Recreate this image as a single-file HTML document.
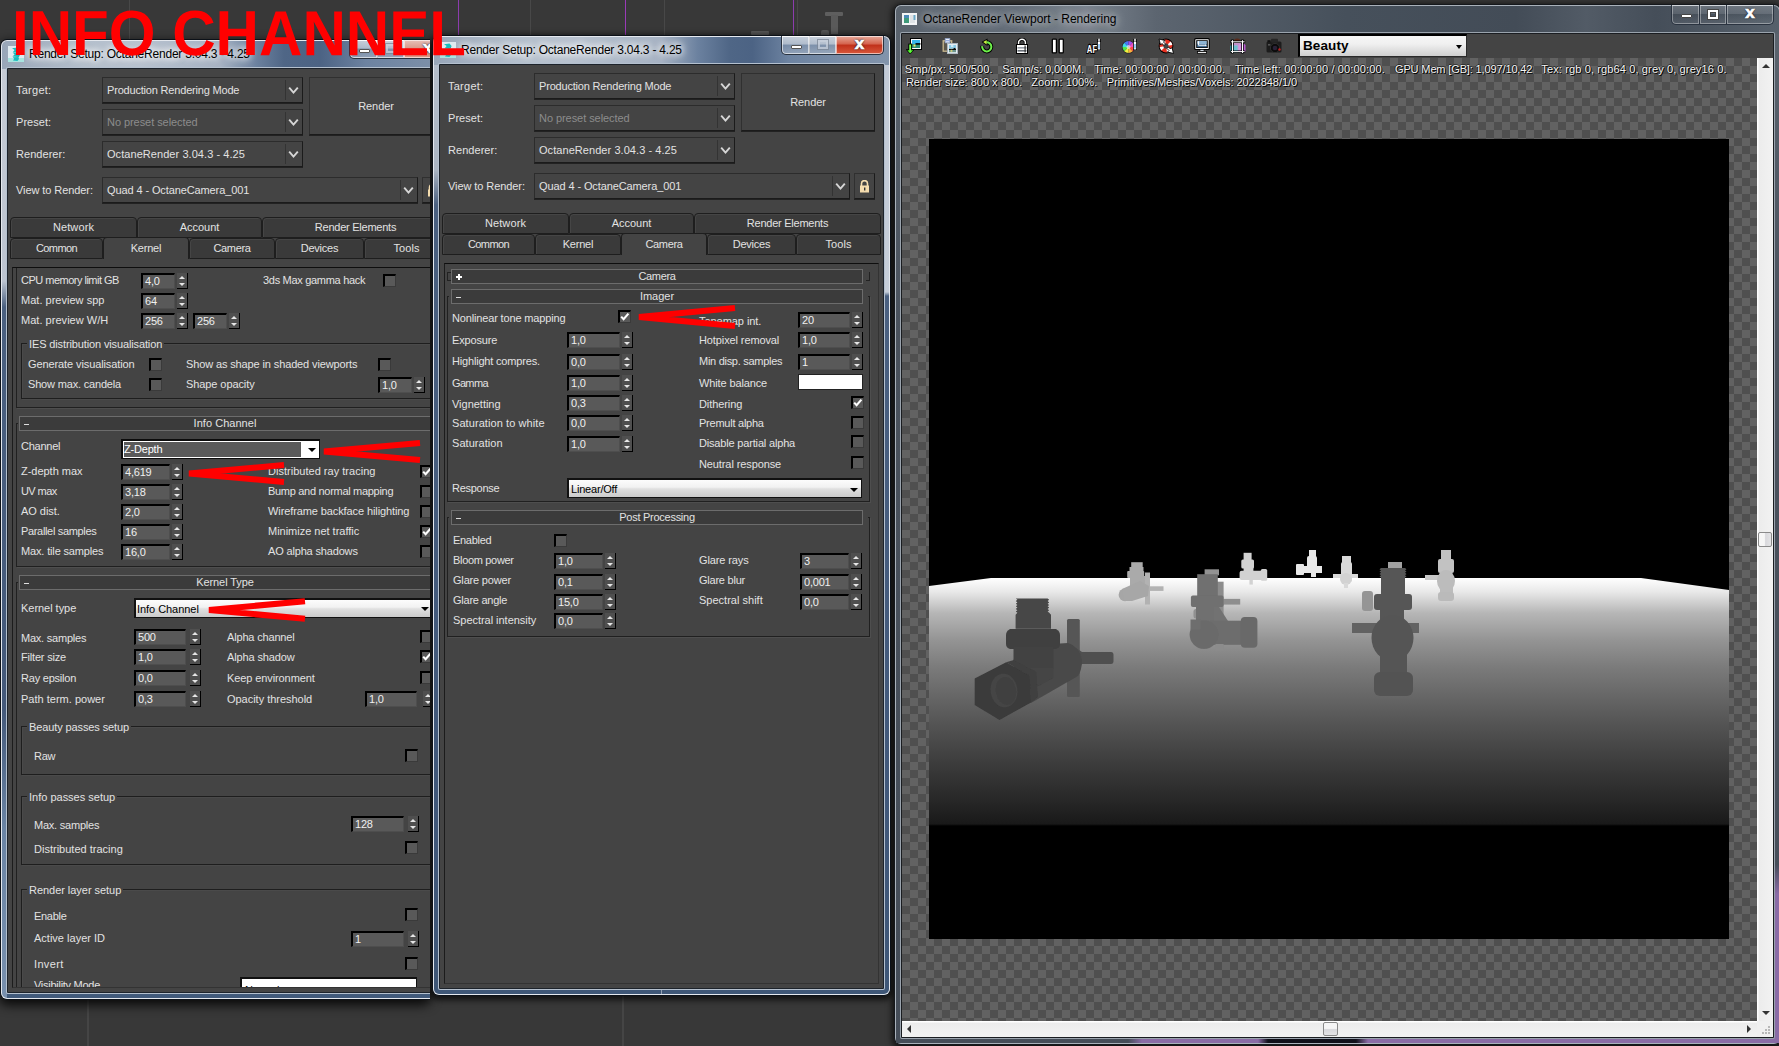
<!DOCTYPE html><html><head><meta charset="utf-8"><title>Info Channel</title><style>
html,body{margin:0;padding:0}
body{width:1779px;height:1046px;overflow:hidden;background:#383838;position:relative;font-family:"Liberation Sans",sans-serif}
div{position:absolute;box-sizing:border-box}
svg{display:block}
.t{font:11px/13px "Liberation Sans",sans-serif;color:#e2e2e2;white-space:nowrap;letter-spacing:-0.2px}
.win{}
.f0{left:0;top:0;right:0;bottom:0;background:#0c1118;border-radius:7px}
.f1{left:1px;top:1px;right:1px;bottom:1px;background:#e4e8ee;border-radius:6px}
.f2{left:2px;top:2px;right:2px;height:28px;border-radius:5px 5px 0 0}
.f2b{left:2px;top:30px;right:2px;bottom:2px;border-radius:0 0 5px 5px}
.gM{background:linear-gradient(90deg,#98a6b8 0%,#b4bfcc 18%,#b8c2cf 30%,#a6b2c3 50%,#6b819f 58%,#4f6686 65%,#4c6384 70%,#6d83a1 78%,#8294ab 100%)}
.gL{background:linear-gradient(90deg,#98a6b8 0%,#b4bfcc 18%,#b8c2cf 30%,#a6b2c3 48%,#6b819f 56%,#4f6686 62%,#4c6384 70%,#6d83a1 80%,#8294ab 100%)}
.sM{background:linear-gradient(#b4bdca 0px,#aab4c2 105px,#4a6080 140px,#41587a 700px,#3f5777 100%) left/50% 100% no-repeat,linear-gradient(#c2cad6 0px,#c6ced9 227px,#4a6080 231px,#41587a 700px,#3f5777 100%) right/50% 100% no-repeat}
.sL{background:linear-gradient(#c6ccd6 0px,#bcc4d0 212px,#4a6080 238px,#44597a 640px,#6a84a4 760px,#7890ae 100%)}
.c1{left:6px;top:28px;right:6px;bottom:6px;background:#b4c0ce;border-radius:2px}
.c2{left:7px;top:29px;right:7px;bottom:7px;background:#1d232b;border-radius:1px}
.client{left:8px;top:30px;right:8px;bottom:8px;background:#444;overflow:hidden}
.ticon{left:8px;top:7px;width:16px;height:16px}
.ttext{left:29px;top:7px;font:12px/16px "Liberation Sans",sans-serif;color:#000;white-space:nowrap;text-shadow:0 0 6px #fff,0 0 8px #fff,0 0 10px #fff}
.wb{top:1px;height:19px;border:1px solid #2a3340;border-top:none;box-shadow:inset 0 0 0 1px rgba(255,255,255,.6);background:linear-gradient(rgba(255,255,255,.62),rgba(255,255,255,.45) 45%,rgba(255,255,255,.08) 50%,rgba(255,255,255,.25))}
.wmin{width:29px;border-radius:0 0 0 5px}
.wmax{width:28px;border-left:none}
.wcls{width:48px;border-left:none;border-radius:0 0 5px 0;background:linear-gradient(#e8a99a,#d4624c 45%,#c0301a 50%,#d8583c)}
.wcls.faded{background:linear-gradient(#e8c0b8,#d89a8c 45%,#c8806e 50%,#dc9a88)}
.xx{left:0;width:100%;top:-2px;text-align:center;font:bold 17px/20px "Liberation Sans",sans-serif;color:#fff;-webkit-text-stroke:0.7px #fff;text-shadow:0 0 2px #223,0 0 2px #223,0 0 1px #000}
.co{background:#444;border:1px solid #2c2c2c;border-right-color:#1b1b1b;border-bottom-color:#1b1b1b;box-shadow:0 1px 0 #222}
.btn{background:#444;border:1px solid #303030;border-right-color:#1b1b1b;border-bottom-color:#1b1b1b;box-shadow:0 1px 0 #222}
.tab{background:#3a3a3a;border:1px solid #1e1e1e;border-bottom:1px solid #1e1e1e;border-radius:4px 4px 0 0;box-shadow:inset 1px 1px 0 #454545}
.tab.on{background:#444;border-bottom:none;box-shadow:none}
.rh{background:#3b3b3b;border:1px solid #6c6c6c}
.rf{border:1px solid #202020;border-top:none;box-shadow:1px 1px 0 #4e4e4e}
.rf:before,.rf:after{content:'';position:absolute;top:0;width:2px;height:1px;background:#202020}
.rf:before{left:-1px}
.rf:after{right:-1px}
.gb{border:1px solid #1e1e1e;box-shadow:inset 1px 1px 0 #4a4a4a, 1px 1px 0 #4a4a4a}
.sp{background:#595959;border:2px solid #000;border-right:1px solid #4e4e4e;border-bottom:1px solid #4e4e4e}
.sp span{position:absolute;left:2px;top:0px;font:11px/13px "Liberation Sans",sans-serif;color:#f0f0f0;letter-spacing:-0.2px}
.sa{background:#4f4f4f;border-right:1px solid #000;border-bottom:1px solid #000}
.sa i{position:absolute;left:2px;width:0;height:0;border-left:3px solid transparent;border-right:3px solid transparent}
.sa i.u{top:3px;border-bottom:3px solid #e6e6e6}
.sa i.d{top:10px;border-top:3px solid #e6e6e6}
.cb{width:13px;height:13px;background:#595959;border:2px solid #000;border-right:1px solid #3a3a3a;border-bottom:1px solid #3a3a3a}
.gR{background:linear-gradient(90deg,#5a636d 0,#646d78 120px,#7a838e 190px,#5c6570 260px,#46505b 450px,#434c57 620px,#525b66 690px,#454e59 760px,#56606b 100%)}
.ib{background:linear-gradient(rgba(255,255,255,.18),rgba(255,255,255,.10) 45%,rgba(0,0,0,.05) 50%,rgba(255,255,255,.06));box-shadow:inset 0 0 0 1px rgba(255,255,255,.35)}
.sR{background:linear-gradient(#5a636d 0,#535c67 120px,#4a525d 300px,#454d58 100%)}
.big{left:11.5px;top:-2.3px;font:bold 63.7px/70px "Liberation Sans",sans-serif;color:#f00;white-space:nowrap;transform:scale(0.9435,1.0) rotate(0.03deg);transform-origin:0 57px}
</style></head><body>
<div style="left:129px;top:0px;width:1px;height:40px;background:#484848"></div><div style="left:458px;top:0px;width:1px;height:36px;background:#8c3cae"></div><div style="left:530px;top:0px;width:1px;height:36px;background:#484848"></div><div style="left:625px;top:0px;width:1px;height:36px;background:#9a3ab8"></div><div style="left:664px;top:0px;width:1px;height:36px;background:#484848"></div><div style="left:793px;top:0px;width:1px;height:36px;background:#8c3cae"></div><div style="left:797px;top:0px;width:1px;height:36px;background:#484848"></div><div style="left:825px;top:12px;width:18px;height:4px;background:#5e5e5e;border-radius:1px"></div><div style="left:831px;top:15px;width:7px;height:19px;background:#5a5a5a"></div><div style="left:821px;top:30px;width:8px;height:5px;background:#585858;border-radius:2px 2px 0 0"></div><div style="left:751px;top:31px;width:18px;height:4px;background:#5a5a5a;border-radius:1px"></div><div style="left:87px;top:999px;width:2px;height:47px;background:#454545"></div><div style="left:622px;top:995px;width:2px;height:51px;background:#454545"></div>
<div style="left:0px;top:39px;width:430px;height:961px;border-radius:7px;box-shadow:0 4px 11px 1px rgba(0,0,0,.85)"></div>
<div style="left:432px;top:35px;width:459px;height:961px;border-radius:7px;box-shadow:0 2px 6px 2px rgba(0,0,0,.7)"></div>
<div style="left:894px;top:4px;width:887px;height:1041px;border-radius:7px;box-shadow:0 2px 6px 2px rgba(0,0,0,.7)"></div>
<div class="win" style="left:894px;top:4px;width:887px;height:1041px"><div class="f0" style="background:#15181c"></div><div class="f1" style="background:#a9b1ba"></div><div class="f2 gR"></div><div class="f2b sR"></div><div style="left:2px;right:2px;bottom:2px;height:5px;background:linear-gradient(90deg,#454d58 0,#454d58 232px,#8a6ca6 246px,#8a6ca6 362px,#10101a 372px,#10101a 460px,#8a6ca6 472px,#8a6ca6 100%)"></div><div style="right:2px;width:5px;top:860px;bottom:2px;background:linear-gradient(#454d58,#8a6ca6 30px,#8a6ca6)"></div><div class="ticon" style="left:8px;top:9px;width:15px;height:12px"><svg width="15" height="12" viewBox="0 0 15 12"><rect width="15" height="12" fill="#f2f4f6"/><rect x="2" y="2" width="5" height="8" fill="#3f9a7a"/><rect x="2" y="2" width="5" height="3" fill="#4a8ab8"/><rect x="8" y="2" width="5" height="8" fill="#dfe3e6"/><rect x="11.5" y="2" width="2" height="5" fill="#6aa8c8"/></svg></div><div class="ttext" style="left:29px;top:7px;text-shadow:0 0 7px rgba(255,255,255,.55),0 0 10px rgba(255,255,255,.45),0 0 14px rgba(255,255,255,.35);letter-spacing:-0.012px">OctaneRender Viewport - Rendering</div><div class="wb wmin ib" style="left:777px;width:29px;height:20px"><div style="left:9px;top:9px;width:11px;height:4px;background:#fff;border:1px solid #444;border-radius:1px"></div></div><div class="wb wmax ib" style="left:806px;width:27px;height:20px"><div style="left:8px;top:5px;width:10px;height:9px;border:2px solid #fff;box-shadow:0 0 0 1px #444, inset 0 0 0 1px #444"></div></div><div class="wb ib" style="left:833px;width:47px;height:20px;border-left:none;border-radius:0 0 5px 0"><div class="xx">x</div></div><div class="c1" style="background:#9aa3ad"></div><div class="c2" style="background:#1a1d21"></div><div class="client" style="background:#444"><div style="left:0px;top:0px;width:871px;height:24px;background:#444"></div><svg width="16" height="16" viewBox="0 0 16 16" style="position:absolute;left:4px;top:4px"><rect x="4.5" y="0.5" width="11" height="11" fill="#fff" stroke="#000" stroke-width="1"/><rect x="6.0" y="2.0" width="8" height="4.0" fill="#38b6ee"/><rect x="6.0" y="6.0" width="8" height="4.0" fill="#2f8f7a"/><rect x="9.45" y="5.12" width="4.95" height="1.6" fill="#000"/><rect x="7.5" y="6.550000000000001" width="2" height="2" fill="#f0e060"/><path d="M4.2 5.6 v7" stroke="#000" stroke-width="3.8"/><path d="M-0.4 11.2 h9.2 l-4.6 5.2 Z" fill="#000"/><path d="M4.2 6.4 v6" stroke="#4dff2a" stroke-width="1.9"/><path d="M1.3 12.2 h5.8 l-2.9 3.2 Z" fill="#4dff2a"/><path d="M4.2 7 v6.5" stroke="#b8ff90" stroke-width=".7"/></svg><svg width="16" height="16" viewBox="0 0 16 16" style="position:absolute;left:40px;top:4px"><rect x="1.2" y="2.8" width="8.5" height="10.4" fill="#5c574c" stroke="#c9b88f" stroke-width="1.3"/><rect x="3.2" y="0.6" width="4.6" height="4.2" fill="#eef3ff" stroke="#93a6cc" stroke-width=".8"/><rect x="3.4" y="2.2" width="4.2" height="1.1" fill="#7f9ad6"/><rect x="5.5" y="5.5" width="10" height="10.3" fill="#e6edf2" stroke="#aab6bf" stroke-width="1"/><rect x="7" y="7" width="7" height="3.6" fill="#8ccbe6"/><rect x="7" y="10.6" width="7" height="3.6" fill="#6b958c"/><path d="M7 10.9 h4 l1.5 -1.2 l1.5 1.2 v1 h-7 Z" fill="#0a0a0a"/><rect x="8.6" y="11.8" width="1.8" height="2" fill="#d8cf78"/><rect x="9" y="7.4" width="2.4" height="1.2" fill="#fff"/></svg><svg width="16" height="16" viewBox="0 0 16 16" style="position:absolute;left:76px;top:4px"><path d="M4.2 8 A4.6 4.6 0 1 0 8.4 4.2" fill="none" stroke="#000" stroke-width="4"/><path d="M9.5 0.5 L3.5 4 L9.5 8 Z" fill="#000"/><path d="M4.2 8.2 A4.6 4.6 0 1 0 8.4 4.2" fill="none" stroke="#6df04a" stroke-width="2"/><path d="M8.6 1.9 L5.2 4.1 L8.6 6.4 Z" fill="#c8f040"/></svg><svg width="16" height="16" viewBox="0 0 16 16" style="position:absolute;left:112px;top:4px"><path d="M4.6 7 V4.6 a3.4 3.4 0 0 1 6.8 0 V7" fill="none" stroke="#000" stroke-width="3.2"/><path d="M4.6 7 V4.6 a3.4 3.4 0 0 1 6.8 0 V7" fill="none" stroke="#fff" stroke-width="1.5"/><rect x="2.5" y="6.5" width="11" height="9" fill="#fff" stroke="#000" stroke-width="1"/><rect x="3.5" y="9" width="9" height="1.6" fill="#9aa0a8"/><rect x="3.5" y="12" width="9" height="1.6" fill="#6a7078"/><rect x="10.5" y="7.5" width="1.2" height="7" fill="#333"/></svg><svg width="16" height="16" viewBox="0 0 16 16" style="position:absolute;left:148px;top:4px"><rect x="2.3" y="1.2" width="4.1" height="13.6" rx=".6" fill="#fff" stroke="#000" stroke-width="1.3"/><rect x="9.2" y="1.2" width="4.1" height="13.6" rx=".6" fill="#fff" stroke="#000" stroke-width="1.3"/></svg><svg width="16" height="16" viewBox="0 0 16 16" style="position:absolute;left:184px;top:4px"><text transform="translate(0.8,15) scale(0.72,1)" font-family="Liberation Sans, sans-serif" font-weight="bold" font-size="10.8" fill="#fff" stroke="#000" stroke-width="2.2" paint-order="stroke">AF</text><path d="M13 1 v3" stroke="#000" stroke-width="3.4"/><path d="M13 3.5 v8.5" stroke="#000" stroke-width="4"/><path d="M13 0.8 v3" stroke="#fff" stroke-width="1.5"/><path d="M13 4 v7.5" stroke="#fff" stroke-width="2.4"/><path d="M13 6 v4.5" stroke="#5aa8f0" stroke-width="1.2"/></svg><svg width="16" height="16" viewBox="0 0 16 16" style="position:absolute;left:220px;top:4px"><circle cx="6.5" cy="9" r="6.6" fill="#222"/><path d="M6.5 9 L12.50 9.00 A6 6 0 0 1 10.74 13.24 Z" fill="#ff4848"/><path d="M6.5 9 L10.74 13.24 A6 6 0 0 1 6.50 15.00 Z" fill="#ffb040"/><path d="M6.5 9 L6.50 15.00 A6 6 0 0 1 2.26 13.24 Z" fill="#f0f040"/><path d="M6.5 9 L2.26 13.24 A6 6 0 0 1 0.50 9.00 Z" fill="#50e850"/><path d="M6.5 9 L0.50 9.00 A6 6 0 0 1 2.26 4.76 Z" fill="#40d8e8"/><path d="M6.5 9 L2.26 4.76 A6 6 0 0 1 6.50 3.00 Z" fill="#4878f8"/><path d="M6.5 9 L6.50 3.00 A6 6 0 0 1 10.74 4.76 Z" fill="#a050f0"/><path d="M6.5 9 L10.74 4.76 A6 6 0 0 1 12.50 9.00 Z" fill="#f050c0"/><circle cx="6.5" cy="9" r="2" fill="#fff" opacity=".6"/><path d="M13 1 v3" stroke="#000" stroke-width="3.4"/><path d="M13 3.5 v8.5" stroke="#000" stroke-width="4"/><path d="M13 0.8 v3" stroke="#fff" stroke-width="1.5"/><path d="M13 4 v7.5" stroke="#fff" stroke-width="2.4"/><path d="M13 6 v4.5" stroke="#5aa8f0" stroke-width="1.2"/></svg><svg width="16" height="16" viewBox="0 0 16 16" style="position:absolute;left:256px;top:4px"><circle cx="8" cy="8" r="7.4" fill="#000"/><circle cx="8" cy="8" r="6.4" fill="#e83020"/><path d="M8 8 L3.5 3.5 A6.4 6.4 0 0 1 7 1.7 Z M8 8 L12.5 12.5 A6.4 6.4 0 0 1 9 14.3 Z M8 8 L12.6 3.6 A6.4 6.4 0 0 1 14.3 7 Z M8 8 L3.4 12.4 A6.4 6.4 0 0 1 1.7 9 Z" fill="#fff"/><circle cx="8" cy="8" r="2.6" fill="#444"/><path d="M1 1 L7 2.5 L5.5 4 L7.5 6 L6 7.5 L4 5.5 L2.5 7 Z" fill="#fff" stroke="#000" stroke-width=".9"/><path d="M15.5 15.5 L9.5 14 L11 12.5 L9 10.5 L10.5 9 L12.5 11 L14 9.5 Z" fill="#fff" stroke="#000" stroke-width=".9"/></svg><svg width="16" height="16" viewBox="0 0 16 16" style="position:absolute;left:292px;top:4px"><rect x="0.7" y="0.7" width="14.6" height="10.8" rx="1" fill="#fff" stroke="#000" stroke-width="1.2"/><rect x="2.2" y="2.2" width="11.6" height="7.8" fill="#0a0a0a"/><rect x="3.2" y="3" width="9.6" height="3" fill="#8db4d4"/><rect x="3.2" y="6" width="9.6" height="3.2" fill="#3f6c96"/><path d="M4.4 3.6 v3.6 h7.6" fill="none" stroke="#fff" stroke-width="1"/><path d="M3.4 4.4 L4.4 3 L5.4 4.4 Z M11.4 6.2 L12.8 7.2 L11.4 8.2 Z" fill="#fff"/><rect x="6" y="11.6" width="4" height="1.8" fill="#cfd8e0" stroke="#000" stroke-width=".6"/><rect x="3.4" y="13.4" width="9.2" height="1.9" fill="#fff" stroke="#000" stroke-width=".8"/></svg><svg width="16" height="16" viewBox="0 0 16 16" style="position:absolute;left:328px;top:4px"><ellipse cx="7.2" cy="2.6" rx="3" ry="2" fill="#5a2a1a"/><rect x="0.4" y="7" width="8" height="7.4" rx="1.5" fill="#30b0b8"/><rect x="8.5" y="6" width="7" height="8.6" rx="1.5" fill="#b858d0"/><rect x="3.6" y="4.8" width="7.6" height="7.6" fill="#d8a0e0" opacity=".85"/><rect x="3.6" y="7.5" width="4" height="4.9" fill="#58c8c8" opacity=".8"/><path d="M2.5 1.6 V15.6 M12.5 1.6 V15.6 M0.3 3.8 H15.2 M0.3 13.6 H15.2" fill="none" stroke="#000" stroke-width="2.4"/><path d="M2.5 2.2 V15 M12.5 2.2 V15 M0.9 3.8 H14.6 M0.9 13.6 H14.6" fill="none" stroke="#fff" stroke-width="1"/></svg><svg width="16" height="16" viewBox="0 0 16 16" style="position:absolute;left:364px;top:4px"><rect x="0.5" y="3.5" width="15" height="11" rx="1.5" fill="#1c1c1c"/><rect x="5" y="0.8" width="7" height="4" rx="1" fill="#262626"/><rect x="1.5" y="2.2" width="3" height="2" fill="#111"/><circle cx="9" cy="10" r="4.6" fill="#0c0c0c" stroke="#333" stroke-width=".8"/><circle cx="9" cy="10" r="2.3" fill="#2a2238"/><circle cx="13.5" cy="11.5" r="1.2" fill="#c02020"/><rect x="2" y="6" width="2.4" height="1.6" fill="#555"/></svg><div style="left:396px;top:0px;width:169px;height:23px;background:linear-gradient(#f6f6f6 0,#f0f0f0 40%,#cfcfcf 100%);border:1px solid #2a2a2a;border-top:2px solid #000;border-left:2px solid #000"><div style="left:3px;top:1px;font:bold 13.5px/17px 'Liberation Sans',sans-serif;color:#000;letter-spacing:0.1px">Beauty</div><div style="right:4px;top:9px;width:0;height:0;border-left:3.5px solid transparent;border-right:3.5px solid transparent;border-top:4px solid #000"></div></div><div style="left:0px;top:24px;width:855px;height:963px;background-color:#4f4f4f;background-image:conic-gradient(#626262 25%,#4f4f4f 0 50%,#626262 0 75%,#4f4f4f 0);background-size:16px 16px;background-position:0 0"></div><div class="t" style="left:2.7px;top:29px;text-shadow:1px 1px 0 #000,-1px 0 0 rgba(0,0,0,.5),0 -1px 0 rgba(0,0,0,.5);color:#f4f4f4;white-space:pre;letter-spacing:0.111px">Smp/px: 500/500.</div><div class="t" style="left:100.2px;top:29px;text-shadow:1px 1px 0 #000,-1px 0 0 rgba(0,0,0,.5),0 -1px 0 rgba(0,0,0,.5);color:#f4f4f4;white-space:pre;letter-spacing:-0.083px">Samp/s: 0,000M.</div><div class="t" style="left:192.3px;top:29px;text-shadow:1px 1px 0 #000,-1px 0 0 rgba(0,0,0,.5),0 -1px 0 rgba(0,0,0,.5);color:#f4f4f4;white-space:pre;letter-spacing:0.111px">Time: 00:00:00 / 00:00:00.</div><div class="t" style="left:332.7px;top:29px;text-shadow:1px 1px 0 #000,-1px 0 0 rgba(0,0,0,.5),0 -1px 0 rgba(0,0,0,.5);color:#f4f4f4;white-space:pre;letter-spacing:0.148px">Time left: 00:00:00 / 00:00:00.</div><div class="t" style="left:493.0px;top:29px;text-shadow:1px 1px 0 #000,-1px 0 0 rgba(0,0,0,.5),0 -1px 0 rgba(0,0,0,.5);color:#f4f4f4;white-space:pre;letter-spacing:-0.135px">GPU Mem [GB]: 1,097/10,42</div><div class="t" style="left:639.3px;top:29px;text-shadow:1px 1px 0 #000,-1px 0 0 rgba(0,0,0,.5),0 -1px 0 rgba(0,0,0,.5);color:#f4f4f4;white-space:pre;letter-spacing:0.130px">Tex: rgb 0, rgb64 0, grey 0, grey16 0.</div><div class="t" style="left:3.9px;top:42px;text-shadow:1px 1px 0 #000,-1px 0 0 rgba(0,0,0,.5),0 -1px 0 rgba(0,0,0,.5);color:#f4f4f4;white-space:pre;letter-spacing:0.000px">Render size: 800 x 800.</div><div class="t" style="left:129.2px;top:42px;text-shadow:1px 1px 0 #000,-1px 0 0 rgba(0,0,0,.5),0 -1px 0 rgba(0,0,0,.5);color:#f4f4f4;white-space:pre;letter-spacing:0.058px">Zoom: 100%.</div><div class="t" style="left:204.8px;top:42px;text-shadow:1px 1px 0 #000,-1px 0 0 rgba(0,0,0,.5),0 -1px 0 rgba(0,0,0,.5);color:#f4f4f4;white-space:pre;letter-spacing:-0.047px">Primitives/Meshes/Voxels: 2022848/1/0</div><div style="left:27px;top:105px;width:800px;height:800px;background:#000;overflow:hidden"><svg width="800" height="800" viewBox="929 139 800 800" style="position:absolute;left:0;top:0"><defs><linearGradient id="gp" x1="0" y1="578" x2="0" y2="826" gradientUnits="userSpaceOnUse"><stop offset="0.0000" stop-color="#ffffff"/><stop offset="0.0565" stop-color="#e8e8e8"/><stop offset="0.1411" stop-color="#b6b6b6"/><stop offset="0.2500" stop-color="#949494"/><stop offset="0.3589" stop-color="#7b7b7b"/><stop offset="0.4677" stop-color="#686868"/><stop offset="0.5766" stop-color="#565656"/><stop offset="0.6815" stop-color="#464646"/><stop offset="0.7903" stop-color="#363636"/><stop offset="0.8992" stop-color="#272727"/><stop offset="0.9919" stop-color="#191919"/><stop offset="1.0000" stop-color="#000000"/></linearGradient><filter id="bl" x="-5%" y="-5%" width="110%" height="110%"><feGaussianBlur stdDeviation="0.7"/></filter></defs><rect x="929" y="139" width="800" height="800" fill="#000"/><polygon points="929,586 991,578 1641,578 1729,590 1729,826 929,826" fill="url(#gp)"/><g filter="url(#bl)"><rect x="1145" y="572.5" width="5" height="32" fill="#b2b2b2"/><rect x="1149" y="586.3" width="14.5" height="4.6" fill="#b2b2b2"/><rect x="1131.2" y="562.2" width="11.5" height="7" fill="#aaaaaa"/><rect x="1129.5" y="567" width="14" height="6" fill="#aaaaaa"/><rect x="1127.2" y="571" width="17" height="7" rx="1" fill="#aaaaaa"/><rect x="1130" y="576" width="15" height="10" fill="#aaaaaa"/><circle cx="1125" cy="594.8" r="6.4" fill="#a6a6a6"/><path d="M1122 589 L1140 581 L1149 586 L1148 596 L1132 601 L1124 601 Z" fill="#a7a7a7"/><rect x="1243.6" y="552.8" width="8" height="8" fill="#d2d2d2"/><rect x="1241.3" y="559.5" width="12.7" height="9" rx="1.5" fill="#d2d2d2"/><rect x="1243.6" y="567" width="9.8" height="12.4" fill="#d2d2d2"/><rect x="1239.6" y="570.8" width="24" height="9.2" rx="2" fill="#d2d2d2"/><rect x="1260.8" y="569" width="6.4" height="11.8" rx="1.5" fill="#d2d2d2"/><rect x="1249.4" y="579" width="3.4" height="5.6" fill="#d2d2d2"/><rect x="1309" y="550" width="7" height="8" fill="#e8e8e8"/><rect x="1307" y="556" width="10" height="12" rx="2" fill="#e8e8e8"/><rect x="1296" y="564" width="8" height="11" rx="1" fill="#e8e8e8"/><rect x="1300" y="566" width="22" height="7" fill="#e8e8e8"/><rect x="1311" y="566" width="5" height="11" fill="#e8e8e8"/><rect x="1342" y="556" width="9" height="8" fill="#d9d9d9"/><rect x="1341" y="562" width="11" height="20" rx="2" fill="#d9d9d9"/><rect x="1333" y="574" width="25" height="4" fill="#d9d9d9"/><circle cx="1346" cy="579" r="6" fill="#d2d2d2"/><rect x="1344" y="583" width="4" height="5" fill="#d9d9d9"/><rect x="1441" y="550" width="10" height="10" fill="#c2c2c2"/><rect x="1438" y="559" width="16" height="14" rx="2" fill="#c2c2c2"/><rect x="1425" y="575" width="16" height="5" fill="#c8c8c8"/><ellipse cx="1446" cy="581" rx="9" ry="11" fill="#bcbcbc"/><rect x="1440" y="585" width="13" height="12" fill="#bcbcbc"/><rect x="1438" y="592" width="16" height="9" rx="3" fill="#bababa"/><rect x="1215.5" y="581.7" width="8.1" height="68.8" fill="#8c8c8c"/><rect x="1222" y="598.9" width="18.2" height="5.7" fill="#8e8e8e"/><rect x="1204.6" y="569.3" width="14.4" height="6" fill="#929292"/><rect x="1193.5" y="609" width="6" height="9.5" rx="2.5" fill="#909090"/><rect x="1197.2" y="574.2" width="20.6" height="22" fill="#6f6f6f"/><rect x="1190.9" y="595.5" width="32.7" height="11.4" rx="2" fill="#6f6f6f"/><rect x="1196" y="606" width="23" height="16" fill="#6f6f6f"/><path d="M1214 606.9 h5 l9 14 h-14 Z" fill="#727272"/><rect x="1210" y="620.7" width="33" height="24.1" fill="#6d6d6d"/><rect x="1240.8" y="617" width="16.6" height="30.7" rx="4" fill="#696969"/><circle cx="1204" cy="634.6" r="14.4" fill="#6b6b6b"/><rect x="1190.5" y="619.5" width="10" height="10" fill="#6e6e6e"/><rect x="1215.5" y="644" width="8.1" height="6.5" fill="#8c8c8c"/><rect x="1352" y="623" width="67" height="10" fill="#626262"/><rect x="1362" y="591" width="11" height="20" rx="3" fill="#959595"/><rect x="1388" y="562" width="14" height="8" fill="#a2a2a2"/><path d="M1381 568 h24 l1.5 1.2 l-1.5 1.2 l1.5 1.2 l-1.5 1.2 l1.5 1.2 l-1.5 1.2 l1.5 1.2 l-1.5 1.2 v18 h-24 v-18 l-1.5 -1.2 l1.5 -1.2 l-1.5 -1.2 l1.5 -1.2 l-1.5 -1.2 l1.5 -1.2 l-1.5 -1.2 Z" fill="#575757"/><rect x="1374" y="594" width="38" height="16" rx="3" fill="#575757"/><rect x="1380" y="608" width="24" height="14" fill="#575757"/><ellipse cx="1392.5" cy="638" rx="21" ry="23" fill="#555"/><path d="M1372 630 L1381 655 L1388 655 Z" fill="#555"/><rect x="1380" y="652" width="27" height="24" fill="#545454"/><rect x="1374" y="672" width="39" height="24" rx="6" fill="#535353"/><rect x="1067" y="619" width="12.8" height="78" rx="1.5" fill="#565656"/><path d="M1076 648 L1082 652 H1111 q2.5 0 2.5 3 v6 q0 3 -2.5 3 H1082 L1076 668 Z" fill="#4f4f4f"/><path d="M1013 660 L1052 644 L1068 643 Q1079 646 1082 660 Q1082 670 1078 676 L1031 703 L1022 690 Z" fill="#494949"/><path d="M1018.6 598.5 h29 l1.6 1.3 l-1.6 1.3 l1.6 1.3 l-1.6 1.3 l1.6 1.3 l-1.6 1.3 l1.6 1.3 l-1.6 1.3 l1.6 1.3 l-1.6 1.3 l1.6 1.3 l1.8 2 v14 h-35.4 v-14 l1.8 -2 l-1.6 -1.3 l1.6 -1.3 l-1.6 -1.3 l1.6 -1.3 l-1.6 -1.3 l1.6 -1.3 l-1.6 -1.3 l1.6 -1.3 l-1.6 -1.3 l1.6 -1.3 l-1.6 -1.3 Z" fill="#464646"/><path d="M1010 629 h46 q4 2 4 6 v9 q0 4 -4 5 h-46 q-4 -1 -4 -5 v-9 q0 -4 4 -6 Z" fill="#414141"/><rect x="1013.5" y="647" width="40" height="22" fill="#434343"/><path d="M1013.5 668 h40 v10 l-22 12 l-18 -12 Z" fill="#444"/><polygon points="974.7,678.4 1006.2,662.3 1029.6,675.7 1031,702.4 999.5,719.9 974.7,705.1" fill="#3a3a3a"/><polygon points="1006.2,662.3 1014,660 1036,672 1038,697 1031,702.4 1029.6,675.7" fill="#3f3f3f"/><ellipse cx="1004" cy="690.5" rx="13.5" ry="17" transform="rotate(-8 1004 690.5)" fill="#444"/><ellipse cx="1006" cy="691" rx="10" ry="14" transform="rotate(-8 1006 691)" fill="#414141"/></g></svg></div><div style="left:855px;top:24px;width:16px;height:963px;background:linear-gradient(90deg,#fff 0,#fff 1px,#ececec 2px,#f2f2f2 100%)"><div style="left:5px;top:6px;width:0;height:0;border-left:4px solid transparent;border-right:4px solid transparent;border-bottom:4px solid #333"></div><div style="left:5px;top:953px;width:0;height:0;border-left:4px solid transparent;border-right:4px solid transparent;border-top:4px solid #333"></div><div style="left:1px;top:474px;width:14px;height:15px;background:linear-gradient(90deg,#f6f6f6 45%,#d8d8dc 55%,#e4e4e6);border:1px solid #8a8a8a;border-radius:2px"></div></div><div style="left:0px;top:987px;width:855px;height:16px;background:linear-gradient(#fff 0,#fff 1px,#ececec 2px,#f2f2f2 100%)"><div style="left:5px;top:4px;width:0;height:0;border-top:4px solid transparent;border-bottom:4px solid transparent;border-right:4px solid #333"></div><div style="left:845px;top:4px;width:0;height:0;border-top:4px solid transparent;border-bottom:4px solid transparent;border-left:4px solid #333"></div><div style="left:421px;top:1px;width:15px;height:14px;background:linear-gradient(#f6f6f6 45%,#d8d8dc 55%,#e4e4e6);border:1px solid #8a8a8a;border-radius:2px"></div></div><div style="left:855px;top:987px;width:16px;height:16px;background:#f0f0f0"><div style="left:11px;top:11px;width:2px;height:2px;background:#b8b8b8"></div><div style="left:8px;top:11px;width:2px;height:2px;background:#b8b8b8"></div><div style="left:5px;top:11px;width:2px;height:2px;background:#b8b8b8"></div><div style="left:11px;top:8px;width:2px;height:2px;background:#b8b8b8"></div><div style="left:8px;top:8px;width:2px;height:2px;background:#b8b8b8"></div><div style="left:11px;top:5px;width:2px;height:2px;background:#b8b8b8"></div></div></div></div>
<div style="left:0;top:0;width:430px;height:1046px;overflow:hidden"><div class="win" style="left:0px;top:39px;width:459px;height:961px"><div class="f0"></div><div class="f1"></div><div class="f2 gL"></div><div class="f2b sL"></div><div style="left:7px;right:7px;bottom:2px;height:4px;background:#415a7b"></div><div class="ticon"><svg width="16" height="16" viewBox="0 0 16 16"><rect width="16" height="16" fill="#dfeaf0"/><rect y="12" width="16" height="4" fill="#a8e4e0"/><path d="M4 2.2 L9.5 1.5 L11.6 4 L9.2 6.2 L5 6 L6.6 4.1 Z M4.6 6.6 L10 6.4 L12 9 L9.6 11 L4.4 10.6 L6.6 8.6 Z M4.8 11.2 L10.4 11 L11 13 L9.4 15 L5 14.6 L6.2 12.8 Z" fill="#18bcbc"/><path d="M9.2 6.2 L11.6 4 L10.4 6.5 Z M9.6 11 L12 9 L10.6 11.2 Z" fill="#0d8f8f"/></svg></div><div class="ttext" style="letter-spacing:-0.217px">Render Setup: OctaneRender 3.04.3 - 4.25</div><div class="wb wmin" style="left:349px"><div style="left:9px;top:9px;width:11px;height:4px;background:#fff;border:1px solid #555;border-radius:1px"></div></div><div class="wb wmax" style="left:377px"><div style="left:9px;top:4px;width:10px;height:9px;border:2px solid #c8d0dc;box-shadow:0 0 0 1px #7c8796;opacity:.75"></div></div><div class="wb wcls faded" style="left:404px"><div class="xx">x</div></div><div class="c1"></div><div class="c2"></div><div class="client"><div class="t" style="left:8px;top:15px;letter-spacing:0.245px;">Target:</div><div class="t" style="left:8px;top:47px;letter-spacing:0.042px;">Preset:</div><div class="t" style="left:8px;top:79px;letter-spacing:0.048px;">Renderer:</div><div class="t" style="left:8px;top:115px;letter-spacing:-0.076px;">View to Render:</div><div class="co" style="left:94px;top:8px;width:201px;height:26px"><div class="t" style="left:4px;top:6px;color:#e2e2e2;letter-spacing:-0.187px;">Production Rendering Mode</div><div style="right:16px;top:2px;width:1px;height:20px;background:#333"></div><svg width="11" height="9" viewBox="0 0 11 9" style="position:absolute;right:3px;top:8px"><path d="M1.2 1.6 L5.5 6.6 L9.8 1.6" fill="none" stroke="#d6d6d6" stroke-width="1.9"/></svg></div><div class="co" style="left:94px;top:40px;width:201px;height:26px"><div class="t" style="left:4px;top:6px;color:#8c8c8c;letter-spacing:-0.060px;">No preset selected</div><div style="right:16px;top:2px;width:1px;height:20px;background:#333"></div><svg width="11" height="9" viewBox="0 0 11 9" style="position:absolute;right:3px;top:8px"><path d="M1.2 1.6 L5.5 6.6 L9.8 1.6" fill="none" stroke="#d6d6d6" stroke-width="1.9"/></svg></div><div class="co" style="left:94px;top:72px;width:201px;height:26px"><div class="t" style="left:4px;top:6px;color:#e2e2e2;letter-spacing:0.061px;">OctaneRender 3.04.3 - 4.25</div><div style="right:16px;top:2px;width:1px;height:20px;background:#333"></div><svg width="11" height="9" viewBox="0 0 11 9" style="position:absolute;right:3px;top:8px"><path d="M1.2 1.6 L5.5 6.6 L9.8 1.6" fill="none" stroke="#d6d6d6" stroke-width="1.9"/></svg></div><div class="co" style="left:94px;top:108px;width:316px;height:26px"><div class="t" style="left:4px;top:6px;color:#e2e2e2;letter-spacing:-0.109px;">Quad 4 - OctaneCamera_001</div><div style="right:16px;top:2px;width:1px;height:20px;background:#333"></div><svg width="11" height="9" viewBox="0 0 11 9" style="position:absolute;right:3px;top:8px"><path d="M1.2 1.6 L5.5 6.6 L9.8 1.6" fill="none" stroke="#d6d6d6" stroke-width="1.9"/></svg></div><div class="btn" style="left:301px;top:8px;width:134px;height:58px;"><div class="t" style="left:0px;width:132px;text-align:center;top:22px;letter-spacing:-0.076px;">Render</div></div><div class="btn" style="left:414px;top:108px;width:21px;height:26px;"><svg width="11" height="13" viewBox="0 0 11 13" style="position:absolute;left:4px;top:6px"><path d="M2.5 6 V3.6 a3 3 0 0 1 6 0 V6" fill="none" stroke="#f4dcae" stroke-width="1.6"/><rect x="1" y="5.5" width="9" height="7" fill="#f4dcae"/><rect x="5" y="7.5" width="1.4" height="3" fill="#333"/></svg></div><div class="tab" style="left:2px;top:148px;width:127px;height:21px"><div class="t" style="left:0;width:100%;text-align:center;top:3px;letter-spacing:0.126px;">Network</div></div><div class="tab" style="left:129px;top:148px;width:125px;height:21px"><div class="t" style="left:0;width:100%;text-align:center;top:3px;letter-spacing:-0.041px;">Account</div></div><div class="tab" style="left:254px;top:148px;width:187px;height:21px"><div class="t" style="left:0;width:100%;text-align:center;top:3px;letter-spacing:-0.242px;">Render Elements</div></div><div class="tab" style="left:2px;top:169px;width:93px;height:21px"><div class="t" style="left:0;width:100%;text-align:center;top:3px;letter-spacing:-0.605px;">Common</div></div><div class="tab on" style="left:95px;top:168px;width:86px;height:22px"><div class="t" style="left:0;width:100%;text-align:center;top:4px;letter-spacing:-0.200px;">Kernel</div></div><div class="tab" style="left:181px;top:169px;width:86px;height:21px"><div class="t" style="left:0;width:100%;text-align:center;top:3px;letter-spacing:-0.325px;">Camera</div></div><div class="tab" style="left:267px;top:169px;width:89px;height:21px"><div class="t" style="left:0;width:100%;text-align:center;top:3px;letter-spacing:-0.238px;">Devices</div></div><div class="tab" style="left:356px;top:169px;width:85px;height:21px"><div class="t" style="left:0;width:100%;text-align:center;top:3px;letter-spacing:0.030px;">Tools</div></div><div class="pn" style="left:4px;top:198px;width:435px;height:721px;border:1px solid #333;border-top-color:#0e0e0e;border-left-color:#1c1c1c;overflow:hidden"><div class="rf" style="left:3px;top:-18px;width:440px;height:158px;"></div><div class="t" style="left:8px;top:6px;letter-spacing:-0.509px;">CPU memory limit GB</div><div class="sp" style="left:128px;top:5px;width:34px;height:16px"><span>4,0</span></div><div class="sa" style="left:164px;top:5px;width:11px;height:16px"><i class="u"></i><i class="d"></i></div><div class="t" style="left:250px;top:6px;letter-spacing:-0.300px;">3ds Max gamma hack</div><div class="cb" style="left:370px;top:6px"></div><div class="t" style="left:8px;top:26px;letter-spacing:0.017px;">Mat. preview spp</div><div class="sp" style="left:128px;top:25px;width:34px;height:16px"><span>64</span></div><div class="sa" style="left:164px;top:25px;width:11px;height:16px"><i class="u"></i><i class="d"></i></div><div class="t" style="left:8px;top:46px;letter-spacing:0.033px;">Mat. preview W/H</div><div class="sp" style="left:128px;top:45px;width:34px;height:16px"><span>256</span></div><div class="sa" style="left:164px;top:45px;width:11px;height:16px"><i class="u"></i><i class="d"></i></div><div class="sp" style="left:180px;top:45px;width:34px;height:16px"><span>256</span></div><div class="sa" style="left:216px;top:45px;width:11px;height:16px"><i class="u"></i><i class="d"></i></div><div class="gb" style="left:8px;top:75px;width:430px;height:56px"></div><div class="t" style="left:14px;top:70px;background:#444;padding:0 2px;letter-spacing:-0.127px;">IES distribution visualisation</div><div class="t" style="left:15px;top:90px;letter-spacing:-0.102px;">Generate visualisation</div><div class="cb" style="left:136px;top:90px"></div><div class="t" style="left:173px;top:90px;letter-spacing:-0.125px;">Show as shape in shaded viewports</div><div class="cb" style="left:365px;top:90px"></div><div class="t" style="left:15px;top:110px;letter-spacing:-0.175px;">Show max. candela</div><div class="cb" style="left:136px;top:110px"></div><div class="t" style="left:173px;top:110px;letter-spacing:-0.085px;">Shape opacity</div><div class="sp" style="left:365px;top:109px;width:34px;height:16px"><span>1,0</span></div><div class="sa" style="left:401px;top:109px;width:11px;height:16px"><i class="u"></i><i class="d"></i></div><div class="rf" style="left:3px;top:155px;width:440px;height:144px;"></div><div class="rh" style="left:6px;top:148px;width:412px;height:15px"><div class="t" style="left:0;width:100%;text-align:center;top:0px;letter-spacing:0.038px;">Info Channel</div><div style="left:4px;top:7px;width:5px;height:1px;background:#ddd"></div></div><div class="t" style="left:8px;top:172px;letter-spacing:-0.247px;">Channel</div><div style="left:108px;top:171px;width:199px;height:20px;background:#fff;border:2px solid #0c0c0c;border-right-width:1px;border-bottom-width:1px"><div style="left:1px;top:1px;width:177px;height:15px;background:#5a5a5a"></div><div class="t" style="left:1px;top:2px;color:#fff">Z-Depth</div><div style="right:3px;top:7px;width:0;height:0;border-left:4px solid transparent;border-right:4px solid transparent;border-top:4px solid #000"></div></div><div class="t" style="left:8px;top:197px;letter-spacing:-0.025px;">Z-depth max</div><div class="sp" style="left:108px;top:196px;width:49px;height:16px"><span>4,619</span></div><div class="sa" style="left:159px;top:196px;width:11px;height:16px"><i class="u"></i><i class="d"></i></div><div class="t" style="left:255px;top:197px;letter-spacing:0.018px;">Distributed ray tracing</div><div class="cb" style="left:407px;top:197px"><svg width="13" height="13" viewBox="0 0 13 13" style="position:absolute;left:-2px;top:-2px"><path d="M3.2 6.6 L5.6 9.2 L10.4 3.6" fill="none" stroke="#fff" stroke-width="2.1"/></svg></div><div class="t" style="left:8px;top:217px;letter-spacing:-0.584px;">UV max</div><div class="sp" style="left:108px;top:216px;width:49px;height:16px"><span>3,18</span></div><div class="sa" style="left:159px;top:216px;width:11px;height:16px"><i class="u"></i><i class="d"></i></div><div class="t" style="left:255px;top:217px;letter-spacing:-0.299px;">Bump and normal mapping</div><div class="cb" style="left:407px;top:217px"></div><div class="t" style="left:8px;top:237px;letter-spacing:-0.047px;">AO dist.</div><div class="sp" style="left:108px;top:236px;width:49px;height:16px"><span>2,0</span></div><div class="sa" style="left:159px;top:236px;width:11px;height:16px"><i class="u"></i><i class="d"></i></div><div class="t" style="left:255px;top:237px;letter-spacing:-0.100px;">Wireframe backface hilighting</div><div class="cb" style="left:407px;top:237px"></div><div class="t" style="left:8px;top:257px;letter-spacing:-0.334px;">Parallel samples</div><div class="sp" style="left:108px;top:256px;width:49px;height:16px"><span>16</span></div><div class="sa" style="left:159px;top:256px;width:11px;height:16px"><i class="u"></i><i class="d"></i></div><div class="t" style="left:255px;top:257px;letter-spacing:-0.016px;">Minimize net traffic</div><div class="cb" style="left:407px;top:257px"><svg width="13" height="13" viewBox="0 0 13 13" style="position:absolute;left:-2px;top:-2px"><path d="M3.2 6.6 L5.6 9.2 L10.4 3.6" fill="none" stroke="#fff" stroke-width="2.1"/></svg></div><div class="t" style="left:8px;top:277px;letter-spacing:-0.149px;">Max. tile samples</div><div class="sp" style="left:108px;top:276px;width:49px;height:16px"><span>16,0</span></div><div class="sa" style="left:159px;top:276px;width:11px;height:16px"><i class="u"></i><i class="d"></i></div><div class="t" style="left:255px;top:277px;letter-spacing:-0.163px;">AO alpha shadows</div><div class="cb" style="left:407px;top:277px"></div><div class="rf" style="left:3px;top:314px;width:440px;height:500px;"></div><div class="rh" style="left:6px;top:307px;width:412px;height:15px"><div class="t" style="left:0;width:100%;text-align:center;top:0px;letter-spacing:-0.091px;">Kernel Type</div><div style="left:4px;top:7px;width:5px;height:1px;background:#ddd"></div></div><div class="t" style="left:8px;top:334px;letter-spacing:-0.035px;">Kernel type</div><div style="left:121px;top:330px;width:300px;height:20px;background:linear-gradient(#fcfcfc 0,#f2f2f2 42%,#e0e0e0 52%,#cbcbcb 100%);border:1px solid #111;border-width:2px 1px 1px 2px"><div class="t" style="left:1px;top:3px;color:#000;letter-spacing:-0.05px">Info Channel</div><div style="left:285px;top:7px;width:0;height:0;border-left:4px solid transparent;border-right:4px solid transparent;border-top:4px solid #000"></div></div><div class="t" style="left:8px;top:364px;letter-spacing:-0.223px;">Max. samples</div><div class="sp" style="left:121px;top:361px;width:52px;height:16px"><span>500</span></div><div class="sa" style="left:177px;top:361px;width:11px;height:16px"><i class="u"></i><i class="d"></i></div><div class="t" style="left:214px;top:363px;letter-spacing:-0.169px;">Alpha channel</div><div class="cb" style="left:407px;top:362px"></div><div class="t" style="left:8px;top:383px;letter-spacing:-0.187px;">Filter size</div><div class="sp" style="left:121px;top:381px;width:52px;height:16px"><span>1,0</span></div><div class="sa" style="left:177px;top:381px;width:11px;height:16px"><i class="u"></i><i class="d"></i></div><div class="t" style="left:214px;top:383px;letter-spacing:-0.128px;">Alpha shadow</div><div class="cb" style="left:407px;top:382px"><svg width="13" height="13" viewBox="0 0 13 13" style="position:absolute;left:-2px;top:-2px"><path d="M3.2 6.6 L5.6 9.2 L10.4 3.6" fill="none" stroke="#fff" stroke-width="2.1"/></svg></div><div class="t" style="left:8px;top:404px;letter-spacing:-0.218px;">Ray epsilon</div><div class="sp" style="left:121px;top:402px;width:52px;height:16px"><span>0,0</span></div><div class="sa" style="left:177px;top:402px;width:11px;height:16px"><i class="u"></i><i class="d"></i></div><div class="t" style="left:214px;top:404px;letter-spacing:-0.099px;">Keep environment</div><div class="cb" style="left:407px;top:403px"></div><div class="t" style="left:8px;top:425px;letter-spacing:0.009px;">Path term. power</div><div class="sp" style="left:121px;top:423px;width:52px;height:16px"><span>0,3</span></div><div class="sa" style="left:177px;top:423px;width:11px;height:16px"><i class="u"></i><i class="d"></i></div><div class="t" style="left:214px;top:425px;letter-spacing:-0.025px;">Opacity threshold</div><div class="sp" style="left:352px;top:423px;width:52px;height:16px"><span>1,0</span></div><div class="sa" style="left:410px;top:423px;width:11px;height:16px"><i class="u"></i><i class="d"></i></div><div class="gb" style="left:8px;top:458px;width:430px;height:49px"></div><div class="t" style="left:14px;top:453px;background:#444;padding:0 2px;letter-spacing:-0.107px;">Beauty passes setup</div><div class="t" style="left:21px;top:482px;letter-spacing:-0.253px;">Raw</div><div class="cb" style="left:392px;top:481px"></div><div class="gb" style="left:8px;top:528px;width:430px;height:69px"></div><div class="t" style="left:14px;top:523px;background:#444;padding:0 2px;letter-spacing:-0.002px;">Info passes setup</div><div class="t" style="left:21px;top:551px;letter-spacing:-0.223px;">Max. samples</div><div class="sp" style="left:338px;top:548px;width:53px;height:16px"><span>128</span></div><div class="sa" style="left:395px;top:548px;width:11px;height:16px"><i class="u"></i><i class="d"></i></div><div class="t" style="left:21px;top:575px;letter-spacing:0.008px;">Distributed tracing</div><div class="cb" style="left:392px;top:573px"></div><div class="gb" style="left:8px;top:621px;width:430px;height:140px"></div><div class="t" style="left:14px;top:616px;background:#444;padding:0 2px;letter-spacing:-0.038px;">Render layer setup</div><div class="t" style="left:21px;top:642px;letter-spacing:-0.291px;">Enable</div><div class="cb" style="left:392px;top:640px"></div><div class="t" style="left:21px;top:664px;letter-spacing:0.006px;">Active layer ID</div><div class="sp" style="left:338px;top:663px;width:53px;height:16px"><span>1</span></div><div class="sa" style="left:395px;top:663px;width:11px;height:16px"><i class="u"></i><i class="d"></i></div><div class="t" style="left:21px;top:690px;letter-spacing:0.350px;">Invert</div><div class="cb" style="left:392px;top:689px"></div><div class="t" style="left:21px;top:711px;letter-spacing:-0.272px;">Visibility Mode</div><div style="left:227px;top:709px;width:177px;height:20px;background:#fff;border:2px solid #111;border-width:2px 1px 1px 2px"><div class="t" style="left:3px;top:5px;color:#000">Normal</div></div></div><svg style="position:absolute;left:0;top:0;overflow:visible" width="1" height="1"><path d="M412 374.0 L316 382.5 L412 391.0" fill="none" stroke="#f00" stroke-width="6" stroke-linejoin="miter"/></svg><svg style="position:absolute;left:0;top:0;overflow:visible" width="1" height="1"><path d="M276 396.0 L181 404.5 L276 413.0" fill="none" stroke="#f00" stroke-width="6" stroke-linejoin="miter"/></svg><svg style="position:absolute;left:0;top:0;overflow:visible" width="1" height="1"><path d="M297 532.2 L201 541 L297 549.8" fill="none" stroke="#f00" stroke-width="6" stroke-linejoin="miter"/></svg></div></div></div>
<div class="win" style="left:432px;top:35px;width:459px;height:961px"><div class="f0"></div><div class="f1"></div><div class="f2 gM"></div><div class="f2b sM"></div><div class="ticon"><svg width="16" height="16" viewBox="0 0 16 16"><rect width="16" height="16" fill="#dfeaf0"/><rect y="12" width="16" height="4" fill="#a8e4e0"/><path d="M4 2.2 L9.5 1.5 L11.6 4 L9.2 6.2 L5 6 L6.6 4.1 Z M4.6 6.6 L10 6.4 L12 9 L9.6 11 L4.4 10.6 L6.6 8.6 Z M4.8 11.2 L10.4 11 L11 13 L9.4 15 L5 14.6 L6.2 12.8 Z" fill="#18bcbc"/><path d="M9.2 6.2 L11.6 4 L10.4 6.5 Z M9.6 11 L12 9 L10.6 11.2 Z" fill="#0d8f8f"/></svg></div><div class="ttext" style="letter-spacing:-0.217px">Render Setup: OctaneRender 3.04.3 - 4.25</div><div class="wb wmin" style="left:349px"><div style="left:9px;top:9px;width:11px;height:4px;background:#fff;border:1px solid #555;border-radius:1px"></div></div><div class="wb wmax" style="left:377px"><div style="left:9px;top:4px;width:10px;height:9px;border:2px solid #c8d0dc;box-shadow:0 0 0 1px #7c8796;opacity:.75"></div></div><div class="wb wcls " style="left:404px"><div class="xx">x</div></div><div class="c1"></div><div class="c2"></div><div class="client"><div class="t" style="left:8px;top:15px;letter-spacing:0.245px;">Target:</div><div class="t" style="left:8px;top:47px;letter-spacing:0.042px;">Preset:</div><div class="t" style="left:8px;top:79px;letter-spacing:0.048px;">Renderer:</div><div class="t" style="left:8px;top:115px;letter-spacing:-0.076px;">View to Render:</div><div class="co" style="left:94px;top:8px;width:201px;height:26px"><div class="t" style="left:4px;top:6px;color:#e2e2e2;letter-spacing:-0.187px;">Production Rendering Mode</div><div style="right:16px;top:2px;width:1px;height:20px;background:#333"></div><svg width="11" height="9" viewBox="0 0 11 9" style="position:absolute;right:3px;top:8px"><path d="M1.2 1.6 L5.5 6.6 L9.8 1.6" fill="none" stroke="#d6d6d6" stroke-width="1.9"/></svg></div><div class="co" style="left:94px;top:40px;width:201px;height:26px"><div class="t" style="left:4px;top:6px;color:#8c8c8c;letter-spacing:-0.060px;">No preset selected</div><div style="right:16px;top:2px;width:1px;height:20px;background:#333"></div><svg width="11" height="9" viewBox="0 0 11 9" style="position:absolute;right:3px;top:8px"><path d="M1.2 1.6 L5.5 6.6 L9.8 1.6" fill="none" stroke="#d6d6d6" stroke-width="1.9"/></svg></div><div class="co" style="left:94px;top:72px;width:201px;height:26px"><div class="t" style="left:4px;top:6px;color:#e2e2e2;letter-spacing:0.061px;">OctaneRender 3.04.3 - 4.25</div><div style="right:16px;top:2px;width:1px;height:20px;background:#333"></div><svg width="11" height="9" viewBox="0 0 11 9" style="position:absolute;right:3px;top:8px"><path d="M1.2 1.6 L5.5 6.6 L9.8 1.6" fill="none" stroke="#d6d6d6" stroke-width="1.9"/></svg></div><div class="co" style="left:94px;top:108px;width:316px;height:26px"><div class="t" style="left:4px;top:6px;color:#e2e2e2;letter-spacing:-0.109px;">Quad 4 - OctaneCamera_001</div><div style="right:16px;top:2px;width:1px;height:20px;background:#333"></div><svg width="11" height="9" viewBox="0 0 11 9" style="position:absolute;right:3px;top:8px"><path d="M1.2 1.6 L5.5 6.6 L9.8 1.6" fill="none" stroke="#d6d6d6" stroke-width="1.9"/></svg></div><div class="btn" style="left:301px;top:8px;width:134px;height:58px;"><div class="t" style="left:0px;width:132px;text-align:center;top:22px;letter-spacing:-0.076px;">Render</div></div><div class="btn" style="left:414px;top:108px;width:21px;height:26px;"><svg width="11" height="13" viewBox="0 0 11 13" style="position:absolute;left:4px;top:6px"><path d="M2.5 6 V3.6 a3 3 0 0 1 6 0 V6" fill="none" stroke="#f4dcae" stroke-width="1.6"/><rect x="1" y="5.5" width="9" height="7" fill="#f4dcae"/><rect x="5" y="7.5" width="1.4" height="3" fill="#333"/></svg></div><div class="tab" style="left:2px;top:148px;width:127px;height:21px"><div class="t" style="left:0;width:100%;text-align:center;top:3px;letter-spacing:0.126px;">Network</div></div><div class="tab" style="left:129px;top:148px;width:125px;height:21px"><div class="t" style="left:0;width:100%;text-align:center;top:3px;letter-spacing:-0.041px;">Account</div></div><div class="tab" style="left:254px;top:148px;width:187px;height:21px"><div class="t" style="left:0;width:100%;text-align:center;top:3px;letter-spacing:-0.242px;">Render Elements</div></div><div class="tab" style="left:2px;top:169px;width:93px;height:21px"><div class="t" style="left:0;width:100%;text-align:center;top:3px;letter-spacing:-0.605px;">Common</div></div><div class="tab" style="left:95px;top:169px;width:86px;height:21px"><div class="t" style="left:0;width:100%;text-align:center;top:3px;letter-spacing:-0.200px;">Kernel</div></div><div class="tab on" style="left:181px;top:168px;width:86px;height:22px"><div class="t" style="left:0;width:100%;text-align:center;top:4px;letter-spacing:-0.325px;">Camera</div></div><div class="tab" style="left:267px;top:169px;width:89px;height:21px"><div class="t" style="left:0;width:100%;text-align:center;top:3px;letter-spacing:-0.238px;">Devices</div></div><div class="tab" style="left:356px;top:169px;width:85px;height:21px"><div class="t" style="left:0;width:100%;text-align:center;top:3px;letter-spacing:0.030px;">Tools</div></div><div class="pn" style="left:4px;top:198px;width:435px;height:721px;border:1px solid #333;border-top-color:#0e0e0e;border-left-color:#1c1c1c;overflow:hidden"><div style="left:2px;top:8px;width:423px;height:9px;border:1px solid #222;border-top:none;border-bottom:none"><div style="left:0;top:0;width:3px;height:1px;background:#222"></div><div style="left:0;bottom:0;width:3px;height:1px;background:#222"></div><div style="right:0;bottom:0;width:3px;height:1px;background:#222"></div></div><div class="rh" style="left:6px;top:5px;width:412px;height:15px"><div class="t" style="left:0;width:100%;text-align:center;top:0px;letter-spacing:-0.325px;">Camera</div><div style="left:4px;top:6px;width:6px;height:2px;background:#fff"></div><div style="left:6px;top:4px;width:2px;height:6px;background:#fff"></div></div><div class="rf" style="left:2px;top:32px;width:423px;height:206px;"></div><div class="rh" style="left:6px;top:25px;width:412px;height:15px"><div class="t" style="left:0;width:100%;text-align:center;top:0px;letter-spacing:-0.027px;">Imager</div><div style="left:4px;top:7px;width:5px;height:1px;background:#ddd"></div></div><div class="t" style="left:7px;top:48px;letter-spacing:-0.153px;">Nonlinear tone mapping</div><div class="cb" style="left:173px;top:46px"><svg width="13" height="13" viewBox="0 0 13 13" style="position:absolute;left:-2px;top:-2px"><path d="M3.2 6.6 L5.6 9.2 L10.4 3.6" fill="none" stroke="#fff" stroke-width="2.1"/></svg></div><div class="t" style="left:254px;top:51px;letter-spacing:-0.053px;">Tonemap int.</div><div class="sp" style="left:353px;top:48px;width:52px;height:16px"><span>20</span></div><div class="sa" style="left:407px;top:48px;width:11px;height:16px"><i class="u"></i><i class="d"></i></div><div class="t" style="left:7px;top:70px;letter-spacing:-0.153px;">Exposure</div><div class="sp" style="left:122px;top:68px;width:53px;height:16px"><span>1,0</span></div><div class="sa" style="left:177px;top:68px;width:11px;height:16px"><i class="u"></i><i class="d"></i></div><div class="t" style="left:7px;top:91px;letter-spacing:-0.182px;">Highlight compres.</div><div class="sp" style="left:122px;top:90px;width:53px;height:16px"><span>0,0</span></div><div class="sa" style="left:177px;top:90px;width:11px;height:16px"><i class="u"></i><i class="d"></i></div><div class="t" style="left:7px;top:113px;letter-spacing:-0.650px;">Gamma</div><div class="sp" style="left:122px;top:111px;width:53px;height:16px"><span>1,0</span></div><div class="sa" style="left:177px;top:111px;width:11px;height:16px"><i class="u"></i><i class="d"></i></div><div class="t" style="left:7px;top:134px;letter-spacing:-0.015px;">Vignetting</div><div class="sp" style="left:122px;top:131px;width:53px;height:16px"><span>0,3</span></div><div class="sa" style="left:177px;top:131px;width:11px;height:16px"><i class="u"></i><i class="d"></i></div><div class="t" style="left:7px;top:153px;letter-spacing:0.077px;">Saturation to white</div><div class="sp" style="left:122px;top:151px;width:53px;height:16px"><span>0,0</span></div><div class="sa" style="left:177px;top:151px;width:11px;height:16px"><i class="u"></i><i class="d"></i></div><div class="t" style="left:7px;top:173px;letter-spacing:0.039px;">Saturation</div><div class="sp" style="left:122px;top:172px;width:53px;height:16px"><span>1,0</span></div><div class="sa" style="left:177px;top:172px;width:11px;height:16px"><i class="u"></i><i class="d"></i></div><div class="t" style="left:254px;top:70px;letter-spacing:-0.108px;">Hotpixel removal</div><div class="sp" style="left:353px;top:68px;width:52px;height:16px"><span>1,0</span></div><div class="sa" style="left:407px;top:68px;width:11px;height:16px"><i class="u"></i><i class="d"></i></div><div class="t" style="left:254px;top:91px;letter-spacing:-0.284px;">Min disp. samples</div><div class="sp" style="left:353px;top:90px;width:52px;height:16px"><span>1</span></div><div class="sa" style="left:407px;top:90px;width:11px;height:16px"><i class="u"></i><i class="d"></i></div><div class="t" style="left:254px;top:113px;letter-spacing:-0.126px;">White balance</div><div style="left:353px;top:110px;width:65px;height:16px;background:#fff;border:1px solid #222"></div><div class="t" style="left:254px;top:134px;letter-spacing:-0.091px;">Dithering</div><div class="cb" style="left:406px;top:132px"><svg width="13" height="13" viewBox="0 0 13 13" style="position:absolute;left:-2px;top:-2px"><path d="M3.2 6.6 L5.6 9.2 L10.4 3.6" fill="none" stroke="#fff" stroke-width="2.1"/></svg></div><div class="t" style="left:254px;top:153px;letter-spacing:-0.240px;">Premult alpha</div><div class="cb" style="left:406px;top:152px"></div><div class="t" style="left:254px;top:173px;letter-spacing:-0.174px;">Disable partial alpha</div><div class="cb" style="left:406px;top:171px"></div><div class="t" style="left:254px;top:194px;letter-spacing:-0.105px;">Neutral response</div><div class="cb" style="left:406px;top:192px"></div><div class="t" style="left:7px;top:218px;letter-spacing:-0.276px;">Response</div><div style="left:122px;top:214px;width:295px;height:20px;background:linear-gradient(#fcfcfc 0,#f2f2f2 42%,#e0e0e0 52%,#cbcbcb 100%);border:1px solid #111;border-width:2px 1px 1px 2px"><div class="t" style="left:2px;top:3px;color:#000">Linear/Off</div><div style="right:3px;top:8px;width:0;height:0;border-left:4px solid transparent;border-right:4px solid transparent;border-top:4px solid #000"></div></div><div class="rf" style="left:2px;top:253px;width:423px;height:120px;"></div><div class="rh" style="left:6px;top:246px;width:412px;height:15px"><div class="t" style="left:0;width:100%;text-align:center;top:0px;letter-spacing:-0.263px;">Post Processing</div><div style="left:4px;top:7px;width:5px;height:1px;background:#ddd"></div></div><div class="t" style="left:8px;top:270px;letter-spacing:-0.295px;">Enabled</div><div class="cb" style="left:109px;top:270px"></div><div class="t" style="left:8px;top:290px;letter-spacing:-0.320px;">Bloom power</div><div class="sp" style="left:109px;top:289px;width:49px;height:16px"><span>1,0</span></div><div class="sa" style="left:160px;top:289px;width:11px;height:16px"><i class="u"></i><i class="d"></i></div><div class="t" style="left:8px;top:310px;letter-spacing:-0.182px;">Glare power</div><div class="sp" style="left:109px;top:310px;width:49px;height:16px"><span>0,1</span></div><div class="sa" style="left:160px;top:310px;width:11px;height:16px"><i class="u"></i><i class="d"></i></div><div class="t" style="left:8px;top:330px;letter-spacing:-0.247px;">Glare angle</div><div class="sp" style="left:109px;top:330px;width:49px;height:16px"><span>15,0</span></div><div class="sa" style="left:160px;top:330px;width:11px;height:16px"><i class="u"></i><i class="d"></i></div><div class="t" style="left:8px;top:350px;letter-spacing:-0.033px;">Spectral intensity</div><div class="sp" style="left:109px;top:349px;width:49px;height:16px"><span>0,0</span></div><div class="sa" style="left:160px;top:349px;width:11px;height:16px"><i class="u"></i><i class="d"></i></div><div class="t" style="left:254px;top:290px;letter-spacing:-0.115px;">Glare rays</div><div class="sp" style="left:355px;top:289px;width:49px;height:16px"><span>3</span></div><div class="sa" style="left:406px;top:289px;width:11px;height:16px"><i class="u"></i><i class="d"></i></div><div class="t" style="left:254px;top:310px;letter-spacing:-0.233px;">Glare blur</div><div class="sp" style="left:355px;top:310px;width:49px;height:16px"><span>0,001</span></div><div class="sa" style="left:406px;top:310px;width:11px;height:16px"><i class="u"></i><i class="d"></i></div><div class="t" style="left:254px;top:330px;letter-spacing:0.009px;">Spectral shift</div><div class="sp" style="left:355px;top:330px;width:49px;height:16px"><span>0,0</span></div><div class="sa" style="left:406px;top:330px;width:11px;height:16px"><i class="u"></i><i class="d"></i></div></div><svg style="position:absolute;left:0;top:0;overflow:visible" width="1" height="1"><path d="M295 243 L199 252 L295 261" fill="none" stroke="#f00" stroke-width="6" stroke-linejoin="miter"/></svg></div></div>
<div class="big">INFO CHANNEL</div>
</body></html>
